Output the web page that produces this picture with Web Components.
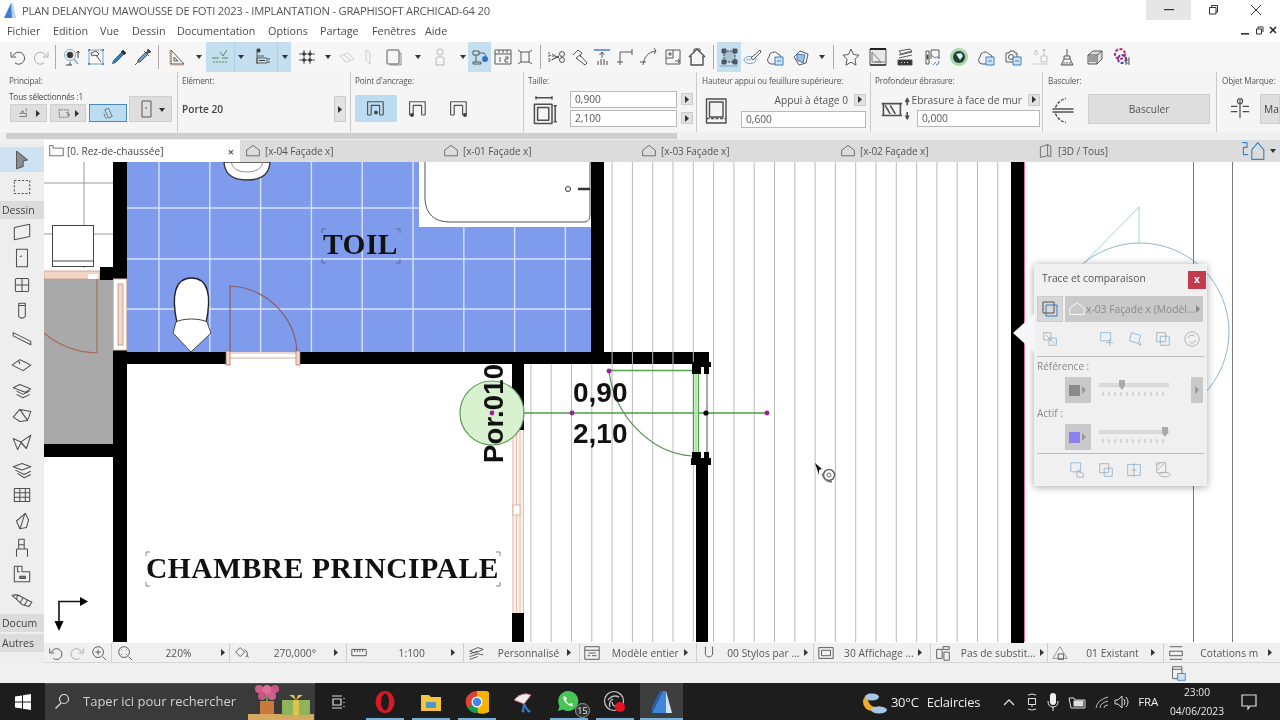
<!DOCTYPE html>
<html lang="fr"><head><meta charset="utf-8"><title>Archicad</title>
<style>
html,body{margin:0;padding:0;height:720px;overflow:hidden;background:#f0f0f0}
body{font-family:"Open Sans","Noto Sans",sans-serif;color:#444}
</style></head><body>
<archi-app></archi-app>
<script>
const ICONS={
undo:'<path d="M5 9a6 6 0 1 1 2 7"/><path d="M3 5v5h5"/>',
redo:'<path d="M15 9a6 6 0 1 0-2 7" opacity=".45"/><path d="M17 5v5h-5" opacity=".45"/>',
target:'<circle cx="8" cy="8" r="5.500" stroke="#7aa8cc"/><circle cx="8" cy="8" r="3" fill="#333"/><path d="M12 12l4 5" stroke="#7aa8cc" stroke-width="1.400"/><path d="M16 5v6M14.500 6l1.500-2 1.500 2M8 15v3M4 18h6" stroke="#333"/>',
hammer:'<rect x="3" y="3" width="14" height="14" stroke="#6f9cc4"/><circle cx="3" cy="3" r="1.100" fill="#3a78c0" stroke="none"/><circle cx="17" cy="3" r="1.100" fill="#3a78c0" stroke="none"/><circle cx="3" cy="17" r="1.100" fill="#3a78c0" stroke="none"/><circle cx="17" cy="17" r="1.100" fill="#3a78c0" stroke="none"/><path d="M5 6l5-2 3 3-2 2-3-1-2 1zM10 8l5 7"/>',
dropper:'<path d="M14 3l3 3-2 2-3-3z" fill="#333"/><path d="M12.500 5.500l2 2-8 8-3 1 1-3z" fill="#3a7fc2" stroke="#2a5f95"/>',
pen:'<path d="M15 2l3 3-3 1-1-1z" fill="#444"/><path d="M13 5l2 2-8 8-2 0 0-2z" fill="#7aa0c4" stroke="#444"/><path d="M11 4l5 5M5 15l-3 3"/>',
tri:'<path d="M4 3v14h13zM7 10v4h4z"/><path d="M3 18h15M3 3v15" stroke="#c7885a" stroke-dasharray="1.500 1"/>',
snap:'<path d="M2 11h7M12 11h6M10 5l3 4 4-6" stroke="#4a8a4a"/><path d="M3 15h14" stroke-dasharray="2 1" stroke="#4a8a4a"/>',
lay:'<path d="M5 2h3v3H5z" fill="#333"/><path d="M5 5v12M5 9h7M5 11h10v5H5z"/><path d="M7 13.500h6M16 12h2M16 15h2" stroke="#333"/>',
grid:'<path d="M7 3v14M13 3v14M2 7h16M2 13h16"/><circle cx="7" cy="7" r="1.400" fill="#333"/><circle cx="13" cy="13" r="1.400" fill="#333"/><circle cx="13" cy="7" r="1.400" fill="#333"/><circle cx="7" cy="13" r="1.400" fill="#333"/>',
f1:'<path d="M3 9l8-3 6 6-8 3z" opacity=".25"/><path d="M7 8l6 5" opacity=".25"/>',
f2:'<path d="M8 3l4 3v11l-4-4z" opacity=".25"/>',
doc:'<rect x="3" y="3" width="12" height="14" rx="1"/><path d="M6 17v1h11V6h-2" stroke="#888"/>',
person:'<circle cx="10" cy="5" r="3" opacity=".4"/><path d="M6 18v-7q4-3 8 0v7z" opacity=".4"/>',
flow:'<path d="M3 4h6v4H3zM9 6h5l2 3M3 15h8v2H3z"/><circle cx="15" cy="12" r="3" fill="#2f78c0" stroke="none"/><path d="M6 8v7"/>',
ruler:'<rect x="2" y="3" width="16" height="14"/><path d="M2 7h16M6 3v3M10 3v3M14 3v3"/><path d="M7 10v5M12 10h3v2h-3v3h3"/>',
cross:'<path d="M6 5h8v10H6zM3 3l3 2M17 3l-3 2M3 17l3-2M17 17l-3-2"/>',
sciss:'<path d="M2 5v10M2 8l10 3M2 14l10-5" stroke-dasharray="2 1"/><path d="M5 13l7-4M5 7l7 4"/><circle cx="15" cy="7" r="2.500"/><circle cx="15" cy="13" r="2.500"/>',
hand:'<path d="M3 8l5-5 4 3-2 3 1 1"/><path d="M6 11l4-3 7 8-2 2z"/>',
trim:'<path d="M2 3h16" stroke="#3a78c0" stroke-width="1.400"/><path d="M10 5v6M7.500 8L10 5l2.500 3"/><path d="M6 18v-4M9 18v-6M12 18v-6M15 18v-4" stroke="#444"/>',
corner:'<path d="M5 18V5h12M2 15h6M17 2v6"/>',
curve:'<path d="M4 18C5 10 9 5 17 4M1 15h6M15 1l2 3-2 3"/>',
resize:'<rect x="3" y="3" width="14" height="14"/><path d="M3 11h7V3M7 5v4M5 7h4M12 14h5M15 12l2 2-2 2"/>',
home:'<path d="M2 10l8-8 8 8M4 9v9h12V9" stroke-width="1.400"/><path d="M7 5V2h6v3"/>',
box3:'<rect x="5" y="4" width="11" height="11" fill="#a9c3d6" stroke="#333" stroke-dasharray="2 1"/><rect x="3" y="2" width="4" height="4" fill="#4a5a68"/><rect x="14" y="2" width="4" height="4" fill="#4a5a68"/><rect x="3" y="13" width="4" height="4" fill="#4a5a68"/><rect x="14" y="13" width="4" height="4" fill="#4a5a68"/><path d="M1 18v1h18" stroke="#7aa0c4"/>',
brush:'<ellipse cx="8" cy="13" rx="6" ry="3.500" stroke="#7aa0c4"/><path d="M18 3L9 11l2 2 8-8z" fill="#f5f5f5"/><path d="M4 13q3-1 5 0" stroke="#7aa0c4"/>',
cloud:'<path d="M10 17H6a4 4 0 0 1-2-7 5 5 0 0 1 9-3 4 4 0 0 1 3 3"/><rect x="10" y="10" width="8" height="8" fill="#cfe3f5" stroke="#2f78c0"/><path d="M12 14h4" stroke="#2f78c0"/>',
cube:'<path d="M3 10l6-6 8 3-2 9-7 2z"/><path d="M6 7l8 1-2 8-6-3z" fill="#9cc0de" stroke="#3a78c0"/>',
star:'<path d="M10 2l2.500 5.500 5.500.7-4 4 1 6-5-3-5 3 1-6-4-4 5.500-.7z"/>',
plan:'<path d="M2 2h16v16H2z" fill="#e8e8e8"/><path d="M2 2h16" stroke-width="2" stroke="#222"/><path d="M4 15V5l9 10zM7 15h10" stroke="#777"/><path d="M2 18h16" stroke-width="1.500" stroke="#333"/>',
stack:'<path d="M4 4l11-2 2 2-11 3zM4 8l13-3M4 11l13-3"/><rect x="3" y="13" width="14" height="5" fill="#333"/><path d="M6 15.500h1M9 15.500h1M12 15.500h1" stroke="#fff"/>',
pages:'<path d="M3 4h3v13H3zM8 3h8v9M8 3v9"/><path d="M8 8q3 4 8 2M10 18l3-3M13 18q3 0 3-4" stroke="#3a78c0"/><rect x="4" y="8" width="1" height="4" fill="#333"/>',
globe:'<circle cx="10" cy="10" r="9" fill="#a6d8ae" stroke="none"/><circle cx="10" cy="10" r="6" fill="#2b3a3a" stroke="none"/><path d="M7 7l5-1 2 3-3 4-2-3z" fill="#cfe" stroke="none"/>',
cam:'<path d="M3 6h3l1-2h4l1 2h2v4M3 6v9h7"/><circle cx="8" cy="10" r="2.500"/><rect x="10" y="10" width="8" height="8" fill="#cfe3f5" stroke="#2f78c0"/><path d="M12 14h4" stroke="#2f78c0"/>',
faded:'<path d="M11 9h6v6h-6zM14 2v7M12 3h4M6 3q-3 4 0 5q3-1 0-5zM3 17h15" opacity=".3"/>',
broom:'<path d="M10 2v7M7 9h6v3H7zM7 12l-3 6h12l-3-6M7 15v3M10 15v3M13 15v3"/>',
layers:'<path d="M3 8l5-4h9v8l-5 5H3zM3 8h9v9M12 8l5-4" fill="#ddd"/><path d="M4 10h7M4 12h7M4 14h7"/>',
multi:'<circle cx="8" cy="7" r="5" stroke="#b02a6a" stroke-width="2" stroke-dasharray="3 1.500"/><circle cx="10" cy="12" r="4" stroke="#5a3ab0" stroke-width="2" stroke-dasharray="3 1.500"/><path d="M14 10v8M17 10v8M14 13h3M14 16h3" stroke="#555"/>',
selArrow:'<path d="M5 2l10 8-4 1 0 5-6 2z" fill="#8d8d8d" stroke="#5a5a5a"/>',
marquee:'<rect x="3" y="4" width="14" height="12" stroke-dasharray="2 1.500"/>',
wall:'<path d="M3 6l14-3v11L3 17z"/>',
door:'<rect x="5" y="2" width="10" height="16"/><path d="M8 9l2-1"/>',
win:'<rect x="4" y="4" width="12" height="12" rx="1"/><path d="M10 4v12M4 10h12"/>',
col:'<path d="M7 3h6v12q-3 3-6 0zM7 5h6"/>',
beam:'<path d="M2 6l16 8v3L2 9z"/>',
slab:'<path d="M1 11l7-5 4 2 6 3-7 5z"/><path d="M7 7l1 3"/>',
stairA:'<path d="M2 8l6-3 10 4-5 3zM5 11l6 3 6-3M5 14l6 3 6-3"/>',
roof:'<path d="M2 11l6-7 10 2-3 8-7 1zM8 4l7 10"/>',
shell:'<path d="M2 6l7 3 9-6-4 12-5-5-3 6z"/><path d="M9 9l5 6"/>',
stair:'<path d="M2 8l8-3 8 3-8 3zM4 11l8 4 6-3M6 14l6 4 6-3"/>',
mesh:'<rect x="3" y="4" width="14" height="12"/><path d="M3 8h14M3 12h14M8 4v12M13 4v12"/>',
morph:'<path d="M5 10l8-7 3 6-2 7-6 1z"/><path d="M13 3c-2 3-2 8-5 14"/>',
chair:'<path d="M7 2h5v9H7zM5 11h10v7M5 11v7M7 7h5"/>',
zone:'<path d="M3 3h7v5h7v9H3z"/><path d="M8 12h5v2H8z" fill="#777"/><path d="M6 3v5h2"/>',
terrain:'<path d="M1 6q5-2 10 2l8 4-3 4-6-2Q5 9 1 6z"/><path d="M6 5l-1 5M11 8l-3 5M15 10l-3 5"/>',
zoom:'<circle cx="9" cy="9" r="6"/><path d="M14 14l4 4M9 6v6M6 9h6"/>',
zoomfit:'<circle cx="9" cy="9" r="6"/><path d="M14 14l4 4M6 6l1 1M12 6l-1 1M6 12l1-1M12 12l-1-1"/>',
rot:'<path d="M3 9l5-5 5 5-5 5zM13 6q4 3 3 7M14 14l2-1 1 2"/>',
scale:'<rect x="2" y="6" width="16" height="7"/><path d="M5 6v3M8 6v3M11 6v3M14 6v3"/>',
layersS:'<path d="M3 8l9-4 6 2-9 4zM3 11l9-3M3 14l9-3 6 1M3 17l9-3"/>',
model:'<rect x="2" y="3" width="16" height="14"/><path d="M2 7h16M6 10h8M5 13h3M10 13h5"/>',
pen2:'<path d="M6 3v9q4 5 8 0V3"/>',
screen:'<rect x="2" y="4" width="16" height="12"/><rect x="5" y="7" width="10" height="6"/>',
subst:'<path d="M3 6h6v10H3zM10 3h7v3h-7zM11 9h6v9h-6z"/>',
reno:'<path d="M2 16L10 3l8 13z" opacity=".6"/><path d="M8 11h6v6H8z"/>',
dim:'<path d="M3 3h14M3 17h14M3 8h14v5H3z"/>',
small:'<rect x="3" y="2" width="11" height="14"/><path d="M3 5h11"/><rect x="9" y="10" width="9" height="8" fill="#cfe3f5" stroke="#3a78c0"/>',
inter:'<path d="M2 10h3v-3h2v3h3M2 14h8M11 3v4M11 9v6"/>',
marq2:'<rect x="3" y="5" width="12" height="10" stroke-dasharray="2 1"/><path d="M12 8l5 4-3 1"/>',
rotb:'<path d="M5 5l5-2 5 11-5 2zM4 10q0 5 4 7"/>',
door2:'<rect x="6" y="2" width="9" height="16"/><path d="M9 9h2"/>',
anc1:'<path d="M3 15V4h13v11M6 15V7h7v8M3 15h3M13 15h3"/><circle cx="10" cy="13" r="1.200" fill="#333"/>',
anc2:'<path d="M3 15V4h13v11M6 15V7h7v8M3 15h3M13 15h3"/><circle cx="5" cy="15" r="1.200" fill="#333"/>',
anc3:'<path d="M3 15V4h13v11M6 15V7h7v8M3 15h3M13 15h3"/><circle cx="15" cy="15" r="1.200" fill="#333"/>',
fac:'<path d="M2 9l8-6 8 6v7H2z"/>',
pl:'<path d="M2 3h4v3h12v9H2z"/>',
d3:'<path d="M3 5l9-3v14l-9 2zM12 2l4 2v13l-4-1"/>',
hmv:'<path d="M9 9l5-6 5 6v8H9zM1 3h4v4H2v6h4"/>',
sill:'<rect x="3" y="2" width="13" height="16"/><rect x="5" y="4" width="9" height="10"/><path d="M3 15h13" stroke-dasharray="2 1"/>',
size:'<rect x="4" y="7" width="11" height="12"/><rect x="6" y="9" width="7" height="8"/><path d="M5 3h10M5 2v2M15 2v2M17 8v10M16 8h2M16 18h2"/>',
reveal:'<path d="M1 8h12M1 15h12M2 8v7M12 8v7M3 9l3 5M6 9l3 5"/><path d="M16 6v3M15 7l1-2 1 2M16 13v3M15 15l1 2 1-2"/>',
swing:'<path d="M3 10h14M3 12h14"/><path d="M5 9Q7 4 12 3M5 13q2 5 7 6" stroke-dasharray="2 1"/>',
mark:'<path d="M3 8h5M3 12h5M12 8h5M12 12h5M10 3v14"/><circle cx="10" cy="4" r="2"/>',
pk:'<rect x="3" y="3" width="11" height="11"/><rect x="6" y="6" width="11" height="11" stroke="#3a78c0"/>',
t1:'<rect x="3" y="3" width="8" height="8"/><rect x="9" y="9" width="8" height="8" stroke="#8ab4d8"/><path d="M5 5l10 10"/>',
t2:'<rect x="3" y="3" width="11" height="9" stroke="#8ab4d8"/><path d="M13 10v8M9 14h8"/>',
t3:'<path d="M6 3l10 3-2 9-10-3z" stroke="#8ab4d8"/><path d="M13 15l3 2v-3"/>',
t4:'<rect x="3" y="3" width="10" height="10"/><rect x="7" y="7" width="10" height="10" stroke="#8ab4d8"/>',
t5:'<circle cx="10" cy="10" r="8"/><path d="M6 9a4 4 0 0 1 7-2M14 11a4 4 0 0 1-7 2"/>',
t6:'<rect x="2" y="2" width="11" height="10" stroke="#8ab4d8"/><path d="M9 18v-7l2-1 1 3 2 0 2 1v4z"/>',
t7:'<rect x="3" y="3" width="10" height="10"/><rect x="8" y="8" width="9" height="9" stroke="#8ab4d8"/>',
t8:'<rect x="3" y="4" width="14" height="12" stroke="#8ab4d8"/><path d="M10 2v16M7 10h6"/>',
t9:'<rect x="3" y="2" width="10" height="11"/><path d="M4 10l7-7M3 6l4-4"/><ellipse cx="12" cy="15" rx="6" ry="2.500"/>'
};
class UiIcon extends HTMLElement{
  connectedCallback(){
    if(this.shadowRoot)return;
    const s=this.getAttribute('s')||20,c=this.getAttribute('c')||'#505050',sw=this.getAttribute('sw')||.95;
    this.attachShadow({mode:'open'}).innerHTML=`<style>:host{display:inline-flex;flex:none;width:${s}px;height:${s}px;align-items:center;justify-content:center}svg{display:block}</style><svg width="${s}" height="${s}" viewBox="0 0 20 20" fill="none" stroke="${c}" stroke-width="${sw}" stroke-linejoin="round">${ICONS[this.getAttribute('n')]||''}</svg>`;
  }
}
customElements.define('ui-icon',UiIcon);

class TitleBar extends HTMLElement{
  constructor(){super();this.attachShadow({mode:'open'}).innerHTML=`<style>
  :host{display:flex;height:20px;background:#fff;align-items:center;font-size:11.2px;color:#555;position:relative}
  .logo{margin-left:3px;width:14px;height:15px;flex:none}
  .t{margin-left:5px;white-space:nowrap;letter-spacing:-.21px}
  .r{margin-left:auto;display:flex;height:20px}
  .b{width:45px;display:flex;align-items:center;justify-content:center}
  .b.m{background:#e6e6e6;margin-right:0}
  </style>
  <svg class="logo" viewBox="0 0 14 15"><path d="M1 15L8 0h2v15z" fill="#3f7fd0"/><path d="M8 0h2l3 15h-4z" fill="#b8d4f2"/></svg>
  <span class="t">PLAN DELANYOU MAWOUSSE DE FOTI 2023 - IMPLANTATION - GRAPHISOFT ARCHICAD-64 20</span>
  <div class="r"><div class="b m"><svg width="12" height="2"><rect width="10" height="1.200" x="1" fill="#333"/></svg></div>
  <div class="b" style="margin-left:-1px"><svg width="12" height="12" fill="none" stroke="#333"><path d="M2.500 3.500h6.500v6.500h-6.500zM4.500 3.500v-2h6v6.500h-2"/></svg></div>
  <div class="b" style="margin-right:2px;margin-left:-2px"><svg width="14" height="14" stroke="#333"><path d="M2 2l10 10M12 2L2 12"/></svg></div></div>`;}
}
customElements.define('title-bar',TitleBar);

class MenuBar extends HTMLElement{
  constructor(){super();
    const items=[['Fichier',46],['Edition',47],['Vue',32],['Dessin',45],['Documentation',91],['Options',52],['Partage',52],['Fenêtres',53],['Aide',40]];
    this.attachShadow({mode:'open'}).innerHTML=`<style>
    :host{display:flex;height:22px;box-sizing:border-box;padding-bottom:2px;background:#fff;align-items:center;padding-left:7px;font-size:10.800px;color:#4a4a4a;position:relative}
    span{display:block;white-space:nowrap;flex:none}
    .r{margin-left:auto;margin-right:3px;display:flex;gap:5px;align-items:center;font-weight:700;font-size:10px;color:#333}
    </style>${items.map(i=>`<span style="width:${i[1]}px">${i[0]}</span>`).join('')}
    <div class="r"><svg width="9" height="9"><rect y="7" width="8" height="1.600" fill="#333"/></svg><svg width="9" height="9" fill="none" stroke="#333"><path d="M1.500 3h5v5h-5zM3 3V1h5v5"/></svg><svg width="8" height="8" stroke="#222" stroke-width="1.500"><path d="M1 1l6 6M7 1L1 7"/></svg></div>`;}
}
customElements.define('menu-bar',MenuBar);

class ToolBar extends HTMLElement{
  constructor(){super();
    const L=[['undo',24],['redo',22],['|',6],['target',28],['hammer',20],['dropper',26],['pen',22],['|',8],['tri',30],['>',14],['snap',28,1],['>',13,2],['lay',30,1],['>',14,2],['grid',32],['>',10],['f1',28],['f2',14],['doc',38],['>',10],['person',34],['>',11],['flow',23,1],['ruler',24],['cross',20],['|',10],['sciss',24],['hand',22],['trim',22],['corner',24],['curve',24],['resize',24],['home',24],['|',8],['box3',24,1],['brush',22],['cloud',24],['cube',28],['>',14],['|',8],['star',28],['plan',26],['stack',28],['pages',28],['globe',24],['cloud',30],['cam',24],['faded',30],['broom',24],['layers',32],['multi',22]];
    this.attachShadow({mode:'open'}).innerHTML=`<style>
    :host{display:flex;height:30px;background:#f6f6f6;padding-left:6px;box-sizing:border-box}
    .i{display:flex;align-items:center;justify-content:center;flex:none;height:30px;box-sizing:border-box}
    .on{background:#c4dff0}
    .div{background:#c4dff0;border-left:1px solid #b0d0e6}
    .sep{width:1px;height:24px;background:#aaa}
    .arr{width:0;height:0;border-left:3px solid transparent;border-right:3px solid transparent;border-top:4px solid #333}
    </style>${L.map(x=>{
      const inner=x[0]=='|'?'<div class="sep"></div>':x[0]=='>'?'<div class="arr"></div>':`<ui-icon n="${x[0]}"></ui-icon>`;
      return `<div class="i ${x[2]==1?'on':x[2]==2?'div':''}" style="width:${x[1]}px">${inner}</div>`}).join('')}`;}
}
customElements.define('tool-bar',ToolBar);

class InfoSec extends HTMLElement{
  constructor(){super();this.attachShadow({mode:'open'}).innerHTML=`<style>
  :host{display:flex;flex-direction:column;flex:none;height:60px;box-sizing:border-box;border-right:1px solid #c9c9c9;padding:4px 0 0 5px;overflow:hidden}
  .l{font-size:8.200px;line-height:10px;height:14px;color:#555;white-space:nowrap;letter-spacing:-.15px}
  .c{flex:1;min-height:0}
  </style><div class="l"></div><div class="c"><slot></slot></div>`;}
  connectedCallback(){this.shadowRoot.querySelector('.l').textContent=this.getAttribute('label');
    this.style.width=this.getAttribute('w')+'px';}
}
customElements.define('info-sec',InfoSec);

class InfoBox extends HTMLElement{
  constructor(){super();
    const arr='<svg width="4" height="7"><path d="M0 0l4 3.500L0 7z" fill="#333"/></svg>';
    this.attachShadow({mode:'open'}).innerHTML=`<style>
    :host{display:flex;height:60px;background:#f5f5f5;font-size:10px;color:#444}
    .row{display:flex;align-items:center}
    .g{background:#dedede;border:1px solid #d0d0d0;box-sizing:border-box;display:flex;align-items:center;justify-content:center;gap:3px}
    .ab{width:12px;height:12px;background:#e2e2e2;border:1px solid #ccc;box-sizing:border-box;display:flex;align-items:center;justify-content:center;flex:none}
    .in{background:#fff;border:1px solid #b9b9b9;box-sizing:border-box;height:17px;line-height:15px;padding-left:4px;font-size:10.200px;color:#555;flex:none}
    .tiny{font-size:8.200px;letter-spacing:-.15px;color:#444;line-height:11px;white-space:nowrap}
    .rt{text-align:right;white-space:nowrap;font-size:10.200px;color:#555}
    </style>
    <info-sec w="178" label="Principal:" style="padding-left:9px">
      <div class="row" style="align-items:flex-start;">
        <div style="width:120px"><div class="tiny" style="height:14px;line-height:14px">Tous sélectionnés :1</div>
          <div class="row" style="gap:3px;height:18px">
            <div class="g" style="width:37px;height:18px;margin-left:1px"><ui-icon n="inter" s="15"></ui-icon>${arr}</div>
            <div class="g" style="width:36px;height:18px"><ui-icon n="marq2" s="15"></ui-icon>${arr}</div>
            <div class="g" style="width:38px;height:18px;background:#bcdcf1;border-color:#4a8ab8"><ui-icon n="rotb" s="15"></ui-icon></div>
          </div></div>
        <div class="g" style="width:43px;height:26px;margin-top:6px;margin-left:0"><ui-icon n="door2" s="20"></ui-icon><div style="width:0;height:0;border:3px solid transparent;border-top:4px solid #333;margin-top:4px"></div></div>
      </div>
    </info-sec>
    <info-sec w="173" label="Elément:" style="padding-left:4px">
      <div class="row" style="margin-top:6px;height:26px">
        <span style="font-weight:600;font-size:10.200px;color:#444;width:152px">Porte 20</span><div class="ab" style="height:26px">${arr}</div>
      </div>
    </info-sec>
    <info-sec w="173" label="Point d'ancrage:" style="padding-left:4px">
      <div class="row" style="margin-top:5px">
        <div class="row" style="width:42px;height:27px;background:#bcdcf1;justify-content:center"><ui-icon n="anc1" s="24"></ui-icon></div>
        <div class="row" style="width:41px;justify-content:center"><ui-icon n="anc2" s="24"></ui-icon></div>
        <div class="row" style="width:41px;justify-content:center"><ui-icon n="anc3" s="24"></ui-icon></div>
      </div>
    </info-sec>
    <info-sec w="173" label="Taille:" style="padding-left:4px">
      <div class="row" style="margin-top:1px">
        <ui-icon n="size" s="32" style="margin:0 10px 0 0"></ui-icon>
        <div style="display:grid;grid-template-columns:107px 12px;column-gap:4px;row-gap:2px">
          <div class="in">0,900</div><div class="ab" style="margin-top:2px">${arr}</div>
          <div class="in">2,100</div><div class="ab" style="margin-top:2px">${arr}</div>
        </div>
      </div>
    </info-sec>
    <info-sec w="174" label="Hauteur appui ou feuillure supérieure:">
      <div style="display:grid;grid-template-columns:39px 125px">
        <div style="grid-row:1 / 3;align-self:center;margin-top:6px"><ui-icon n="sill" s="30"></ui-icon></div>
        <div class="row" style="justify-content:flex-end;height:19px;gap:6px"><span class="rt">Appui à étage 0</span><div class="ab">${arr}</div></div>
        <div class="in">0,600</div>
      </div>
    </info-sec>
    <info-sec w="172" label="Profondeur ébrasure:" style="padding-left:4px">
      <div style="display:grid;grid-template-columns:42px 123px">
        <div style="grid-row:1 / 3;align-self:end"><ui-icon n="reveal" s="34" style="margin-left:5px;margin-bottom:-9px"></ui-icon></div>
        <div class="row" style="justify-content:flex-end;height:19px;gap:6px;margin-left:-40px"><span class="rt">Ebrasure à face de mur</span><div class="ab">${arr}</div></div>
        <div class="in">0,000</div>
      </div>
    </info-sec>
    <info-sec w="174" label="Basculer:">
      <div class="row" style="margin-top:4px">
        <ui-icon n="swing" s="30" style="margin-right:10px"></ui-icon>
        <div class="g" style="width:122px;height:30px;font-size:10.200px;color:#555">Basculer</div>
      </div>
    </info-sec>
    <info-sec w="63" label="Objet Marque:" style="border:0">
      <div class="row" style="margin-top:4px;margin-left:5px">
        <ui-icon n="mark" s="26" style="margin-right:7px"></ui-icon>
        <div class="g" style="width:40px;height:30px;justify-content:flex-start;padding-left:3px;font-size:10.200px">Ma</div>
      </div>
    </info-sec>`;}
}
customElements.define('info-box',InfoBox);

class ScrollStrip extends HTMLElement{
  constructor(){super();this.attachShadow({mode:'open'}).innerHTML=`<style>:host{display:block;height:8px;background:#f0f0f0;padding:1px 0 1px 6px;box-sizing:border-box}div{width:671px;height:6px;background:#cfcfcf}</style><div></div>`;}
}
customElements.define('scroll-strip',ScrollStrip);

class TabBar extends HTMLElement{
  constructor(){super();
    const T=[['fac','[x-04 Façade x]',198],['fac','[x-01 Façade x]',198],['fac','[x-03 Façade x]',199],['fac','[x-02 Façade x]',198],['d3','[3D / Tous]',202]];
    this.attachShadow({mode:'open'}).innerHTML=`<style>
    :host{display:flex;height:22px;background:#dcdcdc;font-size:10px;color:#555;align-items:stretch}
    .t{display:flex;align-items:center;flex:none;box-sizing:border-box;white-space:nowrap}
    .a{width:196px;background:#fff;padding-left:4px;color:#444;letter-spacing:.05px}
    .a b{margin-left:auto;margin-right:6px;font-size:11px;font-weight:700;color:#555}
    .o{padding-left:5px;letter-spacing:-.08px}
    .a span{margin-left:2px}
    .o span{margin-left:4px}
    .end{margin-left:auto;display:flex;align-items:center;gap:5px;padding-right:4px}
    .arr{width:0;height:0;border-left:3px solid transparent;border-right:3px solid transparent;border-top:4px solid #333}
    </style>
    <div class="t a"><ui-icon n="pl" s="17"></ui-icon><span>[0. Rez-de-chaussée]</span><b>×</b></div>
    ${T.map(x=>`<div class="t o" style="width:${x[2]}px"><ui-icon n="${x[0]}" s="16"></ui-icon><span>${x[1]}</span></div>`).join('')}
    <div class="end"><ui-icon n="hmv" s="24" c="#3a86c8"></ui-icon><div class="arr"></div></div>`;}
}
customElements.define('tab-bar',TabBar);

class ToolBox extends HTMLElement{
  constructor(){super();
    const ic=['wall','door','win','col','beam','slab','stairA','roof','shell','stair','mesh','morph','chair','zone','terrain'];
    this.attachShadow({mode:'open'}).innerHTML=`<style>
    :host{display:flex;flex-direction:column;width:44px;flex:none;background:#eeeeee;font-size:10.500px;color:#444;overflow:hidden}
    .top{height:7px;flex:none}
    .sel{height:25px;background:#cfe2f1;display:flex;align-items:center;justify-content:center;flex:none}
    .it{height:26.300px;display:flex;align-items:center;justify-content:center;flex:none}
    .lab{height:18px;line-height:18px;background:#dcdcdc;padding-left:2px;flex:none;width:42px;overflow:hidden;white-space:nowrap;box-sizing:content-box}
    </style>
    <div class="top"></div>
    <div class="sel"><ui-icon n="selArrow" s="22"></ui-icon></div>
    <div class="it" style="height:29px"><ui-icon n="marquee" s="22"></ui-icon></div>
    <div class="lab">Dessin</div>
    ${ic.map(n=>`<div class="it"><ui-icon n="${n}" s="22"></ui-icon></div>`).join('')}
    <div class="lab" style="margin-top:1px">Docum</div>
    <div class="lab" style="margin-top:2px">Autres</div>`;}
}
customElements.define('tool-box',ToolBox);

class TracePanel extends HTMLElement{
  constructor(){super();
    const arr='<svg width="4" height="8"><path d="M0 0l4 4-4 4z" fill="#999"/></svg>';
    const ticks='<svg width="64" height="5" style="display:block;margin:5px 0 0 3px"><path d="M1 0v4M7 0v4M13 0v4M19 0v4M25 0v4M31 0v4M37 0v4M43 0v4M49 0v4M55 0v4M61 0v4" stroke="#bbb"/></svg>';
    const slider=(p)=>`<div class="sl"><div class="tr"><i style="left:${p}px"></i></div>${ticks}</div>`;
    this.attachShadow({mode:'open'}).innerHTML=`<style>
    :host{position:absolute;left:990px;top:102px;width:173px;height:222px;background:#f0f0f0;box-shadow:0 1px 8px rgba(0,0,0,.35);font-size:10px;color:#888;display:flex;flex-direction:column;box-sizing:border-box;padding:0 3px}
    .pt{position:absolute;left:-21px;top:49px;width:22px;height:40px;background:#f4f6f7;clip-path:polygon(0 50%,100% 0,100% 100%)}
    .h{display:flex;align-items:center;height:28px;margin:0 -2px 0 5px;font-size:10.300px;color:#555;flex:none}
    .x{margin-left:auto;width:18px;height:18px;background:#c23a4c;color:#fff;font-weight:700;font-size:10px;line-height:17px;text-align:center;margin-top:4px}
    .r2{display:flex;gap:2px;height:26px;flex:none}
    .sq{width:26px;height:26px;background:#d8d8d8;display:flex;align-items:center;justify-content:center;border:1px solid #ccc;box-sizing:border-box;flex:none}
    .cb{width:138px;background:#c9c9c9;display:flex;align-items:center;color:#8a8a8a;font-size:10.300px;white-space:nowrap;padding:0 3px;box-sizing:border-box;overflow:hidden}
    .r3{display:flex;height:33px;align-items:center;flex:none;border-bottom:1px solid #bbb;margin-bottom:4px}
    .lab{height:12px;line-height:12px;color:#888;font-size:10px;flex:none}
    .r4{display:flex;height:26px;align-items:center;flex:none;margin-left:28px}
    .sw{width:26px;height:26px;background:#c9c9c9;display:flex;align-items:center;gap:2px;padding-left:4px;box-sizing:border-box;flex:none}
    .sw b{display:block;width:11px;height:11px}
    .sl{width:70px;margin-left:8px;flex:none}
    .tr{height:4px;background:#dcdcdc;position:relative;border:1px solid #d6d6d6;box-sizing:border-box}
    .tr i{position:absolute;top:-4px;width:6px;height:10px;background:#aaa;clip-path:polygon(0 0,100% 0,100% 60%,50% 100%,0 60%)}
    .r5{display:flex;height:32px;align-items:center;border-top:1px solid #bbb;flex:none;margin-top:3px}
    </style>
    <div class="pt"></div>
    <div class="h">Trace et comparaison<div class="x">x</div></div>
    <div class="r2" style="margin-top:4px"><div class="sq"><ui-icon n="pk" s="20" sw="1"></ui-icon></div><div class="cb"><ui-icon n="fac" s="18" c="#fff"></ui-icon>x-03 Façade x (Modèl...<svg style="margin-left:1px" width="4" height="8"><path d="M0 0l4 4-4 4z" fill="#888"/></svg></div></div>
    <div class="r3" style="height:34px">
      <ui-icon n="t1" s="18" c="#aaa" style="margin-left:4px"></ui-icon>
      <ui-icon n="t2" s="18" c="#aaa" style="margin-left:39px"></ui-icon>
      <ui-icon n="t3" s="18" c="#aaa" style="margin-left:10px"></ui-icon>
      <ui-icon n="t4" s="18" c="#aaa" style="margin-left:10px"></ui-icon>
      <ui-icon n="t5" s="18" c="#aaa" style="margin-left:11px"></ui-icon>
    </div>
    <div class="lab" style="margin-top:-1px;margin-bottom:5px">Référence :</div>
    <div class="r4"><div class="sw"><b style="background:#8a8a8a"></b>${arr}</div>${slider(19)}<div class="sw" style="width:12px;padding-left:4px;margin-left:22px;height:26px">${arr}</div></div>
    <div class="lab" style="margin:4px 0 5px">Actif :</div>
    <div class="r4"><div class="sw"><b style="background:#8a80ee"></b>${arr}</div>${slider(62)}</div>
    <div class="r5">
      <ui-icon n="t6" s="18" c="#aaa" style="margin-left:32px"></ui-icon>
      <ui-icon n="t7" s="18" c="#aaa" style="margin-left:10px"></ui-icon>
      <ui-icon n="t8" s="18" c="#aaa" style="margin-left:10px"></ui-icon>
      <ui-icon n="t9" s="18" c="#aaa" style="margin-left:11px"></ui-icon>
    </div>`;}
}
customElements.define('trace-panel',TracePanel);

class PlanCanvas extends HTMLElement{
  constructor(){super();
    let hatch='';
    for(let x=530.9;x<1002;x+=20.3){const y0=x<604?364:162;hatch+=`<path d="M${x} ${y0}V642"/>`;}
    let tiles='';
    for(let x=159;x<591;x+=50.8)tiles+=`<path d="M${x} 162V352"/>`;
    for(const y of [208,259,309])tiles+=`<path d="M127 ${y}H591"/>`;
    const dash=(x1,y1,x2,y2)=>`<path d="M${x1} ${y1}h4M${x1} ${y1}v4M${x2} ${y1}h-4M${x2} ${y1}v4M${x1} ${y2}h4M${x1} ${y2}v-4M${x2} ${y2}h-4M${x2} ${y2}v-4" stroke="#555" stroke-width=".7" fill="none"/>`;
    this.attachShadow({mode:'open'}).innerHTML=`<style>
    :host{display:block;position:relative;height:481px;background:#fff;overflow:hidden;flex:none}
    svg{display:block;position:absolute;left:0;top:0}
    text{fill:#111}
    </style>
    <svg width="1236" height="481" viewBox="44 162 1236 481">
      <path d="M84 162V225M44 183H113M44 234H52M93 234H113M84 266V268" stroke="#999" fill="none"/>
      <rect x="52.500" y="225.500" width="41" height="41" fill="#fff" stroke="#444"/><path d="M52 261H93" stroke="#444"/>
      <rect x="44" y="279" width="69" height="165" fill="#a9a9a9"/>
      <rect x="44" y="271" width="56" height="8" fill="#f2d5c4" stroke="#c99a82" stroke-width=".8"/>
      <rect x="88" y="274" width="10" height="5" fill="#fff"/>
      <path d="M44 333Q66 352 97 353V279" fill="none" stroke="#a56a55" stroke-width="1.100"/>
      <rect x="100" y="267" width="13" height="13"/>
      <rect x="44" y="444" width="69" height="13"/>
      <rect x="127" y="162" width="464" height="190" fill="#7f9cec"/>
      <g stroke="#d8e2fb" stroke-width="1.400" fill="none">${tiles}</g>
      <rect x="419" y="162" width="172" height="65" fill="#fff"/>
      <path d="M425 162V200Q427 222 450 222H585Q590 221 590 215V162" fill="#fff" stroke="#555"/>
      <circle cx="568" cy="189" r="2.500" fill="none" stroke="#333"/><path d="M578 189h12" stroke="#333" stroke-width="2.500"/>
      <path d="M224 162Q225 180 247 180Q269 180 270 162Z" fill="#fff" stroke="#333" stroke-width="1.300"/>
      <path d="M231 162Q233 172 247 172Q261 172 263 162" fill="none" stroke="#777" stroke-width=".8"/>
      <path d="M177 323C171 295 175 278 191.500 278C208 278 212 295 206 323Z" fill="#fff" stroke="#222" stroke-width="1.400"/>
      <path d="M176 322C183 318 200 318 207 322L211 333L191 352L173 333Z" fill="#fff" stroke="#444"/>
      <path d="M230 352V286C265 288 295 315 297 352" fill="none" stroke="#8e5a63" stroke-width="1.200"/>
      <rect x="113" y="162" width="14" height="117"/>
      <rect x="113" y="350" width="14" height="292"/>
      <rect x="113" y="352" width="115" height="12"/>
      <rect x="299" y="352" width="410" height="12"/>
      <rect x="591" y="162" width="13" height="190"/>
      <rect x="512" y="364" width="12" height="66"/>
      <rect x="512" y="613" width="12" height="29"/>
      <rect x="696" y="460" width="12" height="182"/>
      <rect x="1011" y="162" width="13" height="481"/>
      <path d="M1024.500 162V642" stroke="#e8708c" stroke-width="1"/>
      <rect x="113.500" y="279" width="13" height="71" fill="#fff" stroke="#e0c0b0"/>
      <rect x="118" y="284" width="5" height="61" fill="#f4d8c8" stroke="#b98f7a" stroke-width=".8"/>
      <rect x="228" y="352" width="71" height="12" fill="#fff"/>
      <path d="M228 353H299M228 358H299" stroke="#d9ab96"/>
      <rect x="226" y="351" width="4" height="14" fill="#f3d9cc" stroke="#a56a55" stroke-width=".7"/><rect x="296" y="351" width="4" height="14" fill="#f3d9cc" stroke="#a56a55" stroke-width=".7"/>
      <g stroke="#bbb" stroke-width="1" fill="none">${hatch}</g>
      <rect x="512" y="430" width="12" height="183" fill="#fbf1ec"/>
      <path d="M513 430V613M516.500 430V613M520 430V613M523.500 430V613" stroke="#e4b9a8" stroke-width=".9"/>
      <rect x="513" y="505" width="7" height="10" fill="#fff" stroke="#c99a82" stroke-width=".7"/>
      <path d="M1193.500 162V642M1232.500 162V642" stroke="#7a7a7a" fill="none"/>
      <path d="M1084 263L1139 207V243" fill="none" stroke="#a9d0de"/>
      <circle cx="1140" cy="332" r="89" fill="none" stroke="#8db8d0"/>
      <circle cx="492" cy="413" r="32" fill="#d8f1cf" stroke="#5c9a58" stroke-width="1.200"/>
      <text x="0" y="0" transform="translate(503 463) rotate(-90)" font-family="Liberation Sans" font-weight="700" font-size="27.500" letter-spacing=".2">Por.010</text>
      <path d="M524 413H767" stroke="#4c9a45" stroke-width="1.300"/>
      <path d="M609 370.500H692M693.500 372V456M698.500 372V456" stroke="#55a34e" stroke-width="1.300" fill="none"/>
      <path d="M696 372V456" stroke="#b7e3ae" stroke-width="3"/>
      <path d="M609 371C614 415 650 453 692 456" stroke="#5a8f55" stroke-width="1.200" fill="none"/>
      <path d="M707 372V456" stroke="#555"/>
      <path d="M692 362h19v5h-2v7h-5v-7h-3v7h-9zM692 452h9v6h3v-6h5v6h2v7H691v-7h1z"/>
      <text x="573" y="402" font-family="Liberation Sans" font-weight="700" font-size="28">0,90</text>
      <text x="573" y="443" font-family="Liberation Sans" font-weight="700" font-size="28">2,10</text>
      <circle cx="706" cy="413" r="2.600"/>
      <g fill="#9b1fa0"><circle cx="492" cy="413" r="2.400"/><circle cx="572" cy="413" r="2.400"/><circle cx="767" cy="413" r="2.400"/><circle cx="609" cy="371" r="2.400"/></g>
      <text x="323" y="254" font-family="Liberation Serif" font-weight="700" font-size="29.500" letter-spacing=".4">TOIL</text>
      ${dash(322,229,400,263)}
      <text x="146" y="578" font-family="Liberation Serif" font-weight="700" font-size="29.500" letter-spacing=".56">CHAMBRE PRINCIPALE</text>
      ${dash(146,552,500,586)}
      <path d="M59 627V601.500H80" fill="none" stroke="#111" stroke-width="1.600"/>
      <path d="M80 597l8 4.500-8 4.500zM54.500 621h9l-4.500 10z"/>
      <path d="M815 463l7 6-3 1 0 5z" fill="#111"/>
      <circle cx="829" cy="475" r="5.500" fill="#fff" stroke="#666" stroke-width="1.500"/>
      <path d="M822 474q3 8 10 8" fill="none" stroke="#777" stroke-width="1.500"/>
      <circle cx="829" cy="475" r="2" fill="none" stroke="#666"/>
    </svg>
    <trace-panel></trace-panel>`;}
}
customElements.define('plan-canvas',PlanCanvas);

class StatusSeg extends HTMLElement{
  connectedCallback(){ if(this.shadowRoot)return;
    this.attachShadow({mode:'open'}).innerHTML=`<style>
    :host{display:flex;align-items:center;flex:none;width:116.800px;height:19px;box-sizing:border-box;border-left:1px solid #cfcfcf;padding-left:3px;font-size:10.200px;color:#555}
    span{flex:1;text-align:center;white-space:nowrap;margin:0 0 0 9px;letter-spacing:.05px}
    svg{flex:none;margin:0 8px 0 4px}
    </style><ui-icon n="${this.getAttribute('i')}" s="18" sw="1"></ui-icon><span>${this.getAttribute('t')}</span><svg width="4" height="7"><path d="M0 0l4 3.500L0 7z" fill="#333"/></svg>`;
  }
}
customElements.define('status-seg',StatusSeg);

class StatusBar extends HTMLElement{
  constructor(){super();this.attachShadow({mode:'open'}).innerHTML=`<style>
  :host{display:flex;height:20px;background:#f0f0f0;border-bottom:1px solid #d6d6d6;box-sizing:border-box;align-items:center;flex:none}
  .z{display:flex;align-items:center;flex:none;width:185px;height:19px;font-size:10.200px;color:#555}
  .n{width:1px;height:19px;background:#cfcfcf;margin:0 4px 0 3px}
  .v{width:51px;text-align:center;margin-left:19px}
  .a{margin-left:17px}
  </style>
  <div class="z"><ui-icon n="undo" s="18" sw="1" style="margin-left:3px"></ui-icon><ui-icon n="redo" s="18" sw="1" style="margin-left:3px"></ui-icon><ui-icon n="zoom" s="18" sw="1" style="margin-left:4px"></ui-icon><div class="n"></div><ui-icon n="zoomfit" s="18" sw="1"></ui-icon><span class="v">220%</span><svg class="a" width="4" height="7"><path d="M0 0l4 3.500L0 7z" fill="#333"/></svg></div>
  <status-seg i="rot" t="270,000°"></status-seg>
  <status-seg i="scale" t="1:100"></status-seg>
  <status-seg i="layersS" t="Personnalisé"></status-seg>
  <status-seg i="model" t="Modèle entier"></status-seg>
  <status-seg i="pen2" t="00 Stylos par ..."></status-seg>
  <status-seg i="screen" t="30 Affichage ..."></status-seg>
  <status-seg i="subst" t="Pas de substit..."></status-seg>
  <status-seg i="reno" t="01 Existant"></status-seg>
  <status-seg i="dim" t="Cotations m"></status-seg>`;}
}
customElements.define('status-bar',StatusBar);

class TaskBar extends HTMLElement{
  constructor(){super();this.attachShadow({mode:'open'}).innerHTML=`<style>
  :host{display:flex;height:37px;background:#1d1d1d;align-items:center;color:#ddd;font-size:14px;flex:none;position:relative}
  .st{width:45px;display:flex;justify-content:center;flex:none}
  .se{width:270px;height:37px;background:#3a3a3a;display:flex;align-items:center;flex:none;box-sizing:border-box;padding:0 0 2px 9px;color:#cfcfcf;font-size:13px;white-space:nowrap;position:relative;border-top:1px solid #555}
  .se span{margin-left:13px}
  .se svg.fl{position:absolute;right:0;top:1px}
  .ap{width:46px;height:37px;display:flex;align-items:center;justify-content:center;flex:none;position:relative;box-sizing:border-box}
  .ap.u::after{content:"";position:absolute;left:4px;right:4px;bottom:0;height:2px;background:#7ab0d8}
  .ap.act{background:#3e3e3e;width:43px}
  .ap.act::after{left:0;right:0}
  .bd{position:absolute;right:2px;bottom:2px;width:15px;height:15px;border-radius:50%;background:#333;border:1px solid #999;box-sizing:border-box;font-size:9px;line-height:13px;text-align:center;color:#eee}
  .tray{margin-left:auto;display:flex;align-items:center;flex:none}
  .w{font-size:13px;color:#eee;white-space:nowrap;letter-spacing:-.2px}
  .clk{width:66px;text-align:center;font-size:10.200px;line-height:19px;color:#e8e8e8;flex:none;margin-left:6px}
  .n{width:38px;margin-right:12px;display:flex;justify-content:center;flex:none}
  </style>
  <div class="st"><svg width="16" height="16" viewBox="0 0 16 16" fill="#fff"><path d="M0 2.500l7-1v6H0zM8 1.300l8-1.300v7.500H8zM0 8.500h7v6l-7-1zM8 8.500h8V16l-8-1.300z"/></svg></div>
  <div class="se"><svg width="16" height="16" fill="none" stroke="#ddd" stroke-width="1.200"><circle cx="10" cy="6" r="4.500"/><path d="M7 10l-5.500 5.500"/></svg><span>Taper ici pour rechercher</span>
    <svg class="fl" width="68" height="36" viewBox="0 0 66 36"><rect x="0" y="29" width="66" height="7" fill="#d6a860"/><rect x="12" y="16" width="14" height="13" fill="#c97a3a"/><path d="M19 16V8" stroke="#5a9a4a" stroke-width="2"/><circle cx="11" cy="4" r="4" fill="#d05f8c"/><circle cx="19" cy="5" r="5" fill="#e06f9a"/><circle cx="27" cy="4" r="4" fill="#c85686"/><circle cx="14" cy="11" r="4" fill="#c85686"/><circle cx="24" cy="11" r="4" fill="#d05f8c"/><rect x="34" y="15" width="28" height="15" fill="#8fb35a"/><rect x="45" y="15" width="6" height="15" fill="#e0c24a"/><path d="M48 15l-7-5h5zM48 15l7-5h-5z" fill="#e0c24a"/></svg></div>
  <div class="ap"><svg width="16" height="18" fill="none" stroke="#ddd" stroke-width="1.200"><path d="M2 3h10M2 15h10M3 6h8v6H3zM14 5v1M14 9v1M14 13v1"/></svg></div>
  <div class="ap u" style="margin-left:1px"><svg width="22" height="24"><ellipse cx="11" cy="12" rx="9.500" ry="11" fill="#d91a24"/><ellipse cx="11" cy="12" rx="4" ry="8.500" fill="#1d1d1d"/></svg></div>
  <div class="ap u"><svg width="22" height="20"><path d="M1 3h8l2 2h10v14H1z" fill="#f3c53e"/><rect x="6" y="10" width="10" height="6" fill="#4d97cf"/></svg></div>
  <div class="ap u"><svg width="24" height="24" viewBox="0 0 24 24"><circle cx="12" cy="12" r="11" fill="#dc4437"/><path d="M12 12L2.500 17.500A11 11 0 0 0 13 23z" fill="#0f9d58"/><path d="M12 1h9.500A11 11 0 0 1 13 23l-1-11z" fill="#f4b400"/><path d="M12 12L2.500 17.500A11 11 0 0 1 3 5z" fill="#dc4437"/><circle cx="12" cy="12" r="5.500" fill="#fff"/><circle cx="12" cy="12" r="4.200" fill="#4285f4"/></svg></div>
  <div class="ap"><svg width="22" height="22" viewBox="0 0 22 22"><path d="M2 9Q10 0 19 4L12 13z" fill="#eee" stroke="#c66" stroke-width=".8"/><path d="M12 13l4 7M12 13l-1 7" stroke="#3a78c0" stroke-width="2"/><circle cx="11" cy="20" r="1.500" fill="#3a78c0"/><circle cx="17" cy="20" r="1.500" fill="#3a78c0"/></svg></div>
  <div class="ap u"><svg width="26" height="26" viewBox="0 0 26 26"><path d="M12 2a10 10 0 0 0-8.500 15L2 22l5-1.500A10 10 0 1 0 12 2z" fill="#45c655"/><path d="M8 7q-2 3 2 7t7 3l-1-3-3 1-3-3 1-3z" fill="#fff"/></svg><div class="bd">15</div></div>
  <div class="ap u"><svg width="24" height="24" viewBox="0 0 24 24" fill="none"><circle cx="11" cy="11" r="9.500" stroke="#ccc" stroke-width="1.200"/><path d="M5 10q5-6 11-3M7 17q-2-5 3-8M16 16q-6 2-7-4" stroke="#bbb" stroke-width="1.400"/><circle cx="17" cy="17" r="5" fill="#e81123"/></svg></div>
  <div class="ap act u" style="margin-left:2px"><svg width="22" height="26" viewBox="0 0 22 26"><path d="M1 24L12 2h3v22z" fill="#3f86dc"/><path d="M15 2l6 22h-6z" fill="#cfe3f8"/><path d="M1 24L12 2l-3 0L1 18z" fill="#2b5fa8"/></svg></div>
  <div class="tray">
    <svg width="26" height="26" viewBox="0 0 26 26" style="margin-right:3px"><circle cx="10" cy="13" r="9" fill="#f0a92a"/><circle cx="14" cy="10" r="8" fill="#1d1d1d"/><ellipse cx="10" cy="8" rx="7" ry="3.500" fill="#a7c7e6"/><ellipse cx="17" cy="21" rx="8" ry="3.500" fill="#a7c7e6"/></svg>
    <span class="w" style="margin-right:8px">30°C</span><span class="w">Eclaircies</span>
    <svg width="12" height="8" fill="none" stroke="#ddd" stroke-width="1.300" style="margin-left:23px"><path d="M1 7l5-5 5 5"/></svg>
    <svg width="14" height="20" fill="none" stroke="#ddd" style="margin-left:10px"><path d="M3 3q4-2 8 0M3 17q4 2 8 0"/><rect x="3.500" y="6.500" width="7" height="6"/><path d="M7 13v2"/></svg>
    <svg width="12" height="20" style="margin-left:8px"><rect x="3" y="1" width="6" height="12" rx="3" fill="#eee"/><path d="M1 9q0 6 5 6t5-6M6 15v4" stroke="#eee" fill="none"/></svg>
    <svg width="18" height="14" style="margin-left:9px" fill="none" stroke="#ddd"><path d="M1 3h5l1 2h10v8H3z"/><rect x="6" y="6" width="9" height="5" fill="#ddd"/></svg>
    <svg width="16" height="14" style="margin-left:8px" fill="none" stroke="#bbb"><path d="M2 13Q3 5 14 2M6 13Q6 8 14 6M10 13q0-3 4-3"/></svg>
    <svg width="16" height="14" style="margin-left:4px" fill="none" stroke="#ddd"><path d="M1 5h3l4-4v12L4 9H1zM10 4q2 3 0 6M12 2q4 5 0 10"/></svg>
    <span class="w" style="font-size:11.500px;margin-left:8px">FRA</span>
    <div class="clk">23:00<br>04/06/2023</div>
    <div class="n"><svg width="16" height="16" fill="none" stroke="#ddd" stroke-width="1.200"><path d="M1 1h14v11H9l-2 3v-3H1z"/></svg></div>
  </div>`;}
}
customElements.define('task-bar',TaskBar);

class ArchiApp extends HTMLElement{
  constructor(){super();this.attachShadow({mode:'open'}).innerHTML=`<style>
  :host{display:flex;flex-direction:column;width:1280px;height:720px;overflow:hidden;background:#f0f0f0;filter:blur(.3px)}
  .work{display:flex;height:523px;flex:none}
  .main{flex:1;display:flex;flex-direction:column;min-width:0}
  .foot{height:20px;flex:none;display:flex;justify-content:flex-end;padding-right:93px;box-sizing:border-box;align-items:center;background:#f0f0f0}
  </style>
  <title-bar></title-bar><menu-bar></menu-bar><tool-bar></tool-bar><info-box></info-box><scroll-strip></scroll-strip>
  <div class="work"><tool-box></tool-box><div class="main"><tab-bar></tab-bar><plan-canvas></plan-canvas><status-bar></status-bar></div></div>
  <div class="foot"><ui-icon n="small" s="17" sw="1"></ui-icon></div>
  <task-bar></task-bar>`;}
}
customElements.define('archi-app',ArchiApp);
</script>
</body></html>
